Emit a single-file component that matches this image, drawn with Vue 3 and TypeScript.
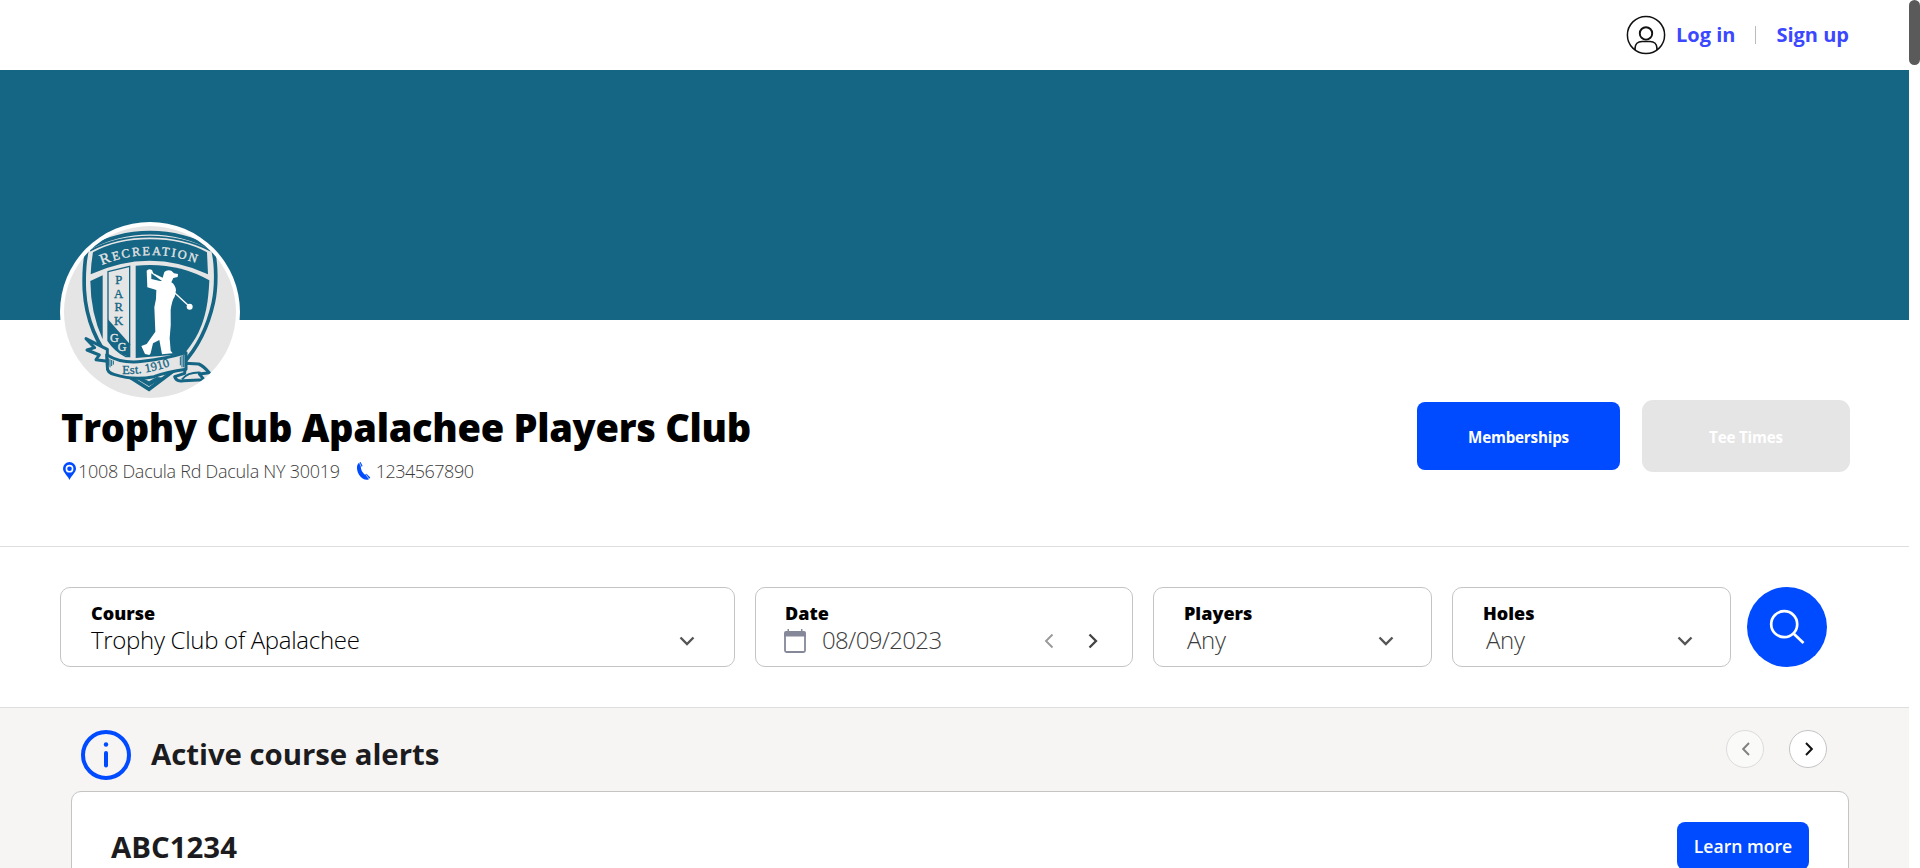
<script setup lang="ts">
interface Field {
  id: string
  label: string
  value: string
}

const picks: Field[] = [
  { id: 'players', label: 'Players', value: 'Any' },
  { id: 'holes', label: 'Holes', value: 'Any' },
]
const course: Field = { id: 'course', label: 'Course', value: 'Trophy Club of Apalachee' }
const date: Field = { id: 'date', label: 'Date', value: '08/09/2023' }
const parkLetters = ['P', 'A', 'R', 'K']
</script>

<template>
  <div class="viewport">
    <main class="page">
      <header class="topbar">
        <svg class="user" viewBox="0 0 40 40" fill="none" stroke="#111">
          <circle cx="20" cy="20" r="18.600" stroke-width="1.500" />
          <circle cx="20" cy="18.400" r="6.200" stroke-width="1.900" />
          <path d="M9 35v-1.500c0-4.500 3-7 7-7h8c4 0 7 2.500 7 7V35" stroke-width="1.700" />
        </svg>
        <a class="login">Log in</a>
        <span class="sep"></span>
        <a class="signup">Sign up</a>
      </header>

      <section class="hero">
        <svg class="crest" viewBox="30 36 540 540">
          <defs>
            <clipPath id="disc"><circle cx="300" cy="306" r="258" /></clipPath>
            <path id="arc" d="M155 165Q300 106 450 163" />
            <path id="ribbon" d="M217 492Q290 494 366 466" />
          </defs>
          <circle cx="300" cy="306" r="270" fill="#fff" />
          <g clip-path="url(#disc)">
            <circle cx="300" cy="306" r="260" fill="#e5e5e5" />
            <path d="M112 117Q200 68 300 68T488 117C500 160 500 230 490 278C474 350 446 410 398 462L297 538L196 474C140 400 108 330 103 240C101 190 104 150 112 117Z" fill="#e5e5e5" stroke="#156584" stroke-width="11" />
            <path d="M120 122Q200 80 300 80T482 122" fill="none" stroke="#156584" stroke-width="5" />
            <path d="M129 127Q200 88 300 88T471 127L474 193Q300 112 122 193Q123 160 129 127Z" fill="#156584" />
            <path d="M121 213L158 196V388Q122 310 121 213Z" fill="#156584" />
            <path d="M257 167Q380 155 478 211C474 300 460 365 402 432L257 444Z" fill="#156584" />
            <path d="M174 185L239 169V440H228Q195 424 174 392Z" fill="#e5e5e5" stroke="#156584" stroke-width="4" />
            <path d="M174 328L240 403V442Q198 430 174 394Z" fill="#156584" />
            <path d="M257 505L297 529L341 503L320 501L297 514L278 505Z" fill="#156584" />
            <g fill="#e5e5e5" stroke="#156584" stroke-width="9" stroke-linejoin="round">
              <path d="M172 418L108 386L134 413L111 420L148 435L138 449L172 454Z" />
              <path d="M406 460L446 462Q460 468 478 488L448 492L462 509L400 512Q378 516 374 500L404 490Z" />
              <path d="M170 434Q214 462 278 454Q350 446 408 428V478Q350 486 312 500Q250 512 194 494Q170 488 172 470Z" />
            </g>
            <path d="M176 445v22M180 448v24M185 450v18M190 452v12M396 436v36M401 434v38M391 440v26M406 434v38" fill="none" stroke="#156584" stroke-width="3" />
            <path d="M396 508Q414 486 452 488" fill="none" stroke="#156584" stroke-width="6" />
            <path d="M290 182Q296 174 306 180L310 190L338 203L343 186Q350 179 364 182L372 190L384 192L383 201L370 204L364 217Q376 224 378 241L374 260Q366 270 362 300Q364 345 359 385L362 422L368 430L336 433L328 390L309 400L302 430L298 435L285 432L274 408L290 402L316 365L313 292Q320 266 319 240L292 232Z" fill="#fff" />
            <path d="M304 190L336 213L330 213L304 207Z" fill="#156584" />
            <path d="M372 247L416 287" fill="none" stroke="#fff" stroke-width="4" />
            <ellipse cx="419" cy="290" rx="9" ry="9" fill="#fff" />
            <g fill="#156584" stroke="#156584" class="slab" text-anchor="middle">
              <text v-for="(letter, i) in parkLetters" :key="letter" x="206" :y="222 + i * 41" font-size="38">{{ letter }}</text>
            </g>
            <g fill="#e5e5e5" stroke="#e5e5e5" class="slab" text-anchor="middle">
              <text x="193" y="397" font-size="36">G</text>
              <text x="216" y="424" font-size="36">G</text>
            </g>
            <text class="slab" fill="#e5e5e5" font-size="37" stroke="#e5e5e5">
              <textPath href="#arc" textLength="290"><tspan font-size="46">R</tspan>ECREATION</textPath>
            </text>
            <text class="slab" fill="#156584" stroke="#156584" font-size="37">
              <textPath href="#ribbon" textLength="146">Est. 1910</textPath>
            </text>
          </g>
        </svg>
      </section>

      <section class="club">
        <div class="identity">
          <h1>Trophy Club Apalachee Players Club</h1>
          <p class="contact">
            <svg class="pin" viewBox="0 0 13 18" fill="#004bff">
              <path fill-rule="evenodd" d="M6.500 0A6.500 6.500 0 0 0 0 6.500C0 10.500 5 14 6.500 18C8 14 13 10.500 13 6.500A6.500 6.500 0 0 0 6.500 0ZM6.500 2.800a3.900 3.900 0 1 1 0 7.800a3.900 3.900 0 0 1 0-7.800Z" />
              <circle cx="6.500" cy="6.700" r="2.300" />
            </svg>
            <span class="address">1008 Dacula Rd Dacula NY 30019</span>
            <svg class="phone" viewBox="0 0 14 18" fill="#004bff">
              <path d="M3.600 0L5.600 4L3.800 5.300C4.100 8.300 5.300 10.400 7.600 12.500L9.500 11.700L13.300 15.500L11.500 17.500C8.500 18.600 4.500 16.500 2.200 13C-.2 9.200-.9 4.200 1.200 1.400Z" />
              <path d="M2.300.600l2.200 4.600M8.600 12l3.200 4.800" stroke="#fff" stroke-width=".7" />
            </svg>
            <span class="number">1234567890</span>
          </p>
        </div>
        <div class="actions">
          <button class="btn primary">Memberships</button>
          <button class="btn disabled">Tee Times</button>
        </div>
      </section>

      <section class="search">
        <div class="field course">
          <div>
            <label>{{ course.label }}</label>
            <span class="value dark">{{ course.value }}</span>
          </div>
          <svg class="chev" viewBox="0 0 16 10"><path d="M1.500 1.500L8 8L14.500 1.500" /></svg>
        </div>
        <div class="field date">
          <div>
            <label>{{ date.label }}</label>
            <span class="value row">
              <svg class="cal" viewBox="0 0 22 24">
                <path d="M1 4V21.500Q1 23 2.500 23H19.500Q21 23 21 21.500V4" fill="none" stroke="#858899" stroke-width="1.800" />
                <path d="M0 7.500V4Q0 2 2 2H3.500V0H5V2H17V0H18.500V2H20Q22 2 22 4V7.500Z" fill="#858899" />
              </svg>
              <span>{{ date.value }}</span>
            </span>
          </div>
          <div class="steps">
            <svg class="step off" viewBox="0 0 10 16"><path d="M8.500 1.500L2 8L8.500 14.500" /></svg>
            <svg class="step" viewBox="0 0 10 16"><path d="M1.500 1.500L8 8L1.500 14.500" /></svg>
          </div>
        </div>
        <div v-for="pick in picks" :key="pick.id" class="field pick">
          <div>
            <label>{{ pick.label }}</label>
            <span class="value inset">{{ pick.value }}</span>
          </div>
          <svg class="chev" viewBox="0 0 16 10"><path d="M1.500 1.500L8 8L14.500 1.500" /></svg>
        </div>
        <button class="go" aria-label="Search">
          <svg viewBox="0 0 36 36" fill="none" stroke="#fff" stroke-width="2.700">
            <circle cx="15.200" cy="15.200" r="13" />
            <path d="M24.500 24.500L34.500 34" />
          </svg>
        </button>
      </section>

      <section class="alerts">
        <div class="alerts-head">
          <svg class="info" viewBox="0 0 50 50">
            <circle cx="25" cy="25" r="23" fill="none" stroke="#004bff" stroke-width="4" />
            <circle cx="25" cy="14.500" r="2.200" fill="#004bff" />
            <path d="M25 23V35.500" stroke="#004bff" stroke-width="4" stroke-linecap="round" />
          </svg>
          <h2>Active course alerts</h2>
          <div class="pager">
            <button class="round off" aria-label="Previous"><svg viewBox="0 0 8 14"><path d="M7 1L1.200 7L7 13" /></svg></button>
            <button class="round" aria-label="Next"><svg viewBox="0 0 8 14"><path d="M1 1L6.800 7L1 13" /></svg></button>
          </div>
        </div>
        <article class="card">
          <h3>ABC1234</h3>
          <button class="more">Learn more</button>
        </article>
      </section>
    </main>
    <div class="rail"><div class="thumb"></div></div>
  </div>
</template>

<style scoped>
.viewport {
  height: 868px;
  overflow: hidden;
  display: flex;
  background: #fff;
  font-family: "Open Sans", sans-serif;
}
.page { width: 1909px; flex: none; }
.rail { width: 11px; }
.thumb { height: 65px; border-radius: 6px; background: #5a5a5a; }
h1, h2, h3, p { margin: 0; }
button { border: 0; padding: 0; font-family: inherit; display: flex; align-items: center; justify-content: center; }
svg { display: block; flex: none; }

.topbar {
  height: 70px;
  box-sizing: border-box;
  padding: 0 60px 2px 0;
  display: flex;
  align-items: center;
  justify-content: flex-end;
  font-size: 20px;
  font-weight: 700;
  color: #3b48ff;
}
.user { width: 40px; height: 40px; margin: 2px 10px 0 0; }
.sep { width: 1px; height: 18px; margin: 2px 20px 0; background: #bbb; }

.hero { height: 250px; background: #156584; display: flex; }
.crest { width: 180px; height: 180px; margin: 152px 0 0 60px; overflow: visible; }
.slab { font-family: "Liberation Serif", serif; }

.club {
  height: 227px;
  box-sizing: border-box;
  border-bottom: 1px solid #dedede;
  padding: 80px 59px 0 61px;
  display: flex;
  justify-content: space-between;
}
.identity { padding-top: 2px; }
h1 { font-size: 38px; line-height: 50px; font-weight: 800; white-space: nowrap; color: #000; letter-spacing: -.280px; }
.contact {
  margin-top: 7px;
  padding-left: 2px;
  display: flex;
  align-items: center;
  height: 24px;
  font-size: 18px;
  line-height: 24px;
  font-weight: 300;
  color: #3c3c3c;
  letter-spacing: -.270px;
}
.number { letter-spacing: -.500px; }
.pin { width: 13px; height: 18px; margin-right: 2px; }
.phone { width: 14px; height: 18px; margin: 0 5px 0 17px; }
.actions { display: flex; gap: 22px; align-items: center; height: 72px; }
.btn { font-size: 15.200px; font-weight: 700; letter-spacing: -.200px; color: #fff; padding-top: 1px; box-sizing: border-box; }
.primary { width: 203px; height: 68px; border-radius: 8px; background: #004bff; }
.disabled { width: 208px; height: 72px; border-radius: 11px; background: #e5e5e5; }

.search {
  height: 161px;
  box-sizing: border-box;
  border-bottom: 1px solid #dedede;
  padding-left: 60px;
  display: flex;
  align-items: center;
  gap: 20px;
}
.field {
  height: 80px;
  box-sizing: border-box;
  border: 1px solid #c4c4c4;
  border-radius: 10px;
  padding: 12px 0 0 30px;
  display: flex;
  justify-content: space-between;
}
.field.course { width: 675px; padding-right: 39px; }
.field.date { width: 378px; padding-right: 34px; padding-left: 29px; }
.field.pick { width: 279px; padding-right: 37px; }
.field label { display: block; font-size: 18px; line-height: 26px; font-weight: 800; color: #000; }
.value { display: block; font-size: 24px; line-height: 27px; font-weight: 300; color: #3c3c3c; letter-spacing: -.300px; }
.value.dark { color: #000; }
.value.inset { padding-left: 3px; }
.value.row { display: flex; gap: 16px; margin-left: -1px; letter-spacing: -.650px; }
.cal { width: 22px; height: 24px; margin-top: 3px; }
.chev { width: 16px; height: 10px; margin-top: 36px; fill: none; stroke: #555; stroke-width: 2.400; }
.steps { display: flex; gap: 34px; margin-top: 33px; }
.step { width: 10px; height: 16px; fill: none; stroke: #444; stroke-width: 2.300; }
.step.off { stroke: #999; stroke-width: 1.900; }
.go { width: 80px; height: 80px; border-radius: 50%; background: #004bff; margin-left: -4px; }
.go svg { width: 36px; height: 36px; }

.alerts { height: 400px; background: #f6f5f4; padding: 22px 60px 0 71px; }
.alerts-head { display: flex; padding: 0 22px 0 10px; height: 61px; }
.info { width: 50px; height: 50px; margin-right: 20px; }
h2, h3 { font-size: 29.400px; font-weight: 700; color: #1c1c20; }
h2 { line-height: 48px; letter-spacing: -.050px; }
.pager { display: flex; gap: 25px; margin-left: auto; }
.round { width: 38px; height: 38px; border-radius: 50%; border: 1px solid #c4c4c4; background: #fff; box-sizing: border-box; }
.round.off { opacity: .5; }
.round svg { width: 8px; height: 14px; margin-left: 2px; fill: none; stroke: #111; stroke-width: 1.900; }
.card {
  height: 200px;
  border: 1px solid #c4c4c4;
  border-radius: 10px;
  background: #fff;
  display: flex;
  align-items: flex-start;
  justify-content: space-between;
  padding: 30px 39px 0 39px;
}
h3 { line-height: 50px; }
.more { width: 132px; height: 48px; border-radius: 8px; background: #004bff; color: #fff; font-size: 17.600px; font-weight: 600; }
</style>
